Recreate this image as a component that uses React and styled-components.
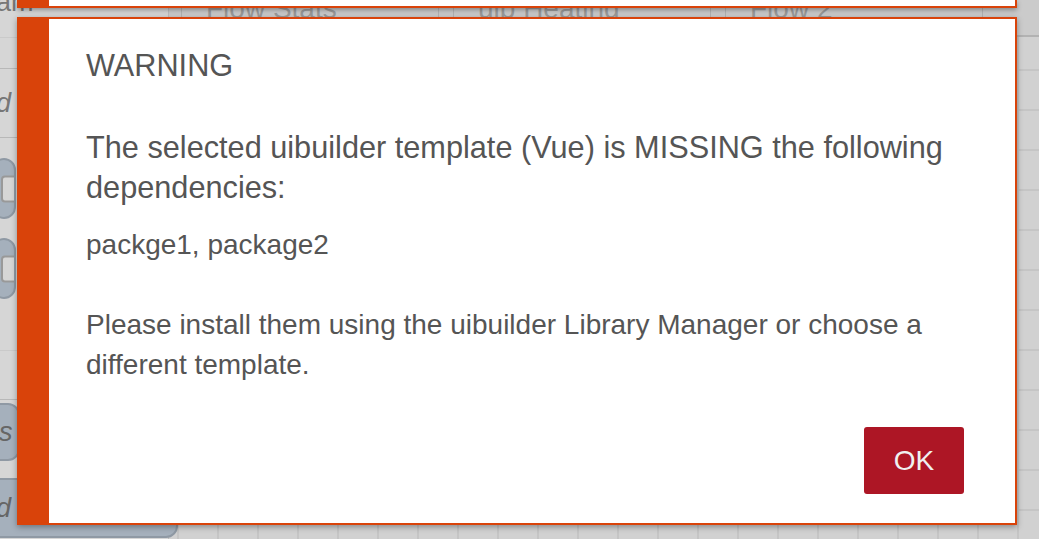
import React from 'react'
import styled, { createGlobalStyle } from 'styled-components'

const GlobalStyle = createGlobalStyle`
  html, body {
    margin: 0;
    padding: 0;
    overflow: hidden;
  }
  body {
    font-family: 'Liberation Sans', Arial, sans-serif;
  }
`

const Editor = styled.div`
  position: relative;
  display: flex;
  width: 1039px;
  height: 539px;
  overflow: hidden;
  background: #d1d1d1;
`

const Palette = styled.div`
  width: 168px;
  flex-shrink: 0;
  display: flex;
  flex-direction: column;
  background: #d6d6d6;
  border-right: 1px solid #bdbdbd;
  color: #777;
  font-size: 27px;
`

const PaletteRow = styled.div`
  height: ${(p) => p.h}px;
  flex-shrink: 0;
  border-bottom: 1px solid ${(p) => (p.dark ? '#b8b8b8' : '#cacaca')};
  display: flex;
  align-items: ${(p) => p.align || 'center'};
  font-style: ${(p) => (p.italic ? 'italic' : 'normal')};
  line-height: 1;
  white-space: nowrap;
  overflow: hidden;
`

const RowLabel = styled.span`
  margin-left: ${(p) => p.x || 0}px;
  margin-top: ${(p) => p.y || 0}px;
`

const NodeSlot = styled.div`
  height: ${(p) => p.h}px;
  flex-shrink: 0;
  padding-top: ${(p) => p.pad || 0}px;
  box-sizing: border-box;
`

const PaletteNode = styled.div`
  position: relative;
  width: ${(p) => p.w}px;
  height: ${(p) => p.h}px;
  margin-left: ${(p) => p.left || 0}px;
  background: #a5b0bc;
  border: 2px solid #8f99a4;
  border-radius: 12px;
  box-sizing: border-box;
  display: flex;
  align-items: center;
  padding-left: ${(p) => p.indent || 8}px;
  color: #666;
  font-style: italic;
  font-size: 27px;
  white-space: nowrap;
  overflow: hidden;
`

const Port = styled.div`
  position: absolute;
  right: -4px;
  top: 50%;
  width: 13px;
  height: 23px;
  transform: translateY(-50%);
  background: #d6d6d6;
  border: 2px solid #999;
  border-radius: 4px;
`

const Workspace = styled.div`
  flex: 1;
  display: flex;
  flex-direction: column;
`

const TabBar = styled.div`
  height: 37px;
  flex-shrink: 0;
  display: flex;
  align-items: flex-start;
  padding-left: 12px;
  background: #cbcbcb;
  border-bottom: 2px solid #b2b2b2;
  box-sizing: border-box;
`

const Tab = styled.div`
  width: 258px;
  height: 100%;
  box-sizing: border-box;
  border-left: 1px solid #b4b4b4;
  border-right: 1px solid #b4b4b4;
  margin-right: 14px;
  padding-left: 24px;
  color: #9b9b9b;
  font-size: 28px;
  line-height: 17px;
  white-space: nowrap;
  overflow: hidden;
`

const Grid = styled.div`
  flex: 1;
  background-color: #d1d1d1;
  background-image: linear-gradient(#c5c5c5 2px, transparent 2px),
    linear-gradient(90deg, #c5c5c5 2px, transparent 2px);
  background-size: 40px 40px;
  background-position: 8px 32px;
`

const Notifications = styled.div`
  position: absolute;
  left: 17px;
  top: 0;
  width: 1000px;
  display: flex;
  flex-direction: column;
  gap: 9px;
`

const PrevNotice = styled.div`
  height: 8px;
  box-sizing: border-box;
  background: #fff;
  border: 2px solid #d9430a;
  border-top: none;
  border-left: 32px solid #d9430a;
  box-shadow: 0 2px 5px rgba(0, 0, 0, 0.35);
`

const Dialog = styled.div`
  display: flex;
  flex-direction: column;
  background: #fff;
  border: 2px solid #d9430a;
  border-left: 32px solid #d9430a;
  padding: 27px 51px 29px 37px;
  box-shadow: 0 2px 6px rgba(0, 0, 0, 0.35);
  color: #555;
`

const Title = styled.p`
  margin: 0 0 42px;
  font-size: 30.7px;
  line-height: 40px;
`

const Text = styled.p`
  margin: 0 0 ${(p) => p.gap || 0}px;
  font-size: ${(p) => (p.large ? 30.7 : 28)}px;
  line-height: 40px;
`

const Actions = styled.div`
  display: flex;
  justify-content: flex-end;
  margin-top: 42px;
`

const OkButton = styled.button`
  width: 100px;
  height: 67px;
  border: none;
  border-radius: 3px;
  background: #ad1625;
  color: #f0f0f0;
  font-family: 'Liberation Sans', Arial, sans-serif;
  font-size: 28px;
  cursor: pointer;
`

export default function App() {
  return (
    <>
      <GlobalStyle />
      <Editor>
        <Palette>
          <PaletteRow h={37} align="flex-start">
            <RowLabel x={-4} y={-11}>am</RowLabel>
          </PaletteRow>
          <PaletteRow h={30} dark />
          <PaletteRow h={68} italic dark>
            <RowLabel x={-4}>d v</RowLabel>
          </PaletteRow>
          <NodeSlot h={80} pad={20}>
            <PaletteNode w={24} h={61} left={-8}>
              <Port />
            </PaletteNode>
          </NodeSlot>
          <NodeSlot h={90} pad={20}>
            <PaletteNode w={24} h={61} left={-8}>
              <Port />
            </PaletteNode>
          </NodeSlot>
          <PaletteRow h={42} />
          <PaletteRow h={48} dark />
          <NodeSlot h={74} pad={3}>
            <PaletteNode w={60} h={58} left={-40} indent={22}>bs</PaletteNode>
          </NodeSlot>
          <NodeSlot h={80} pad={4}>
            <PaletteNode w={220} h={60} left={-42} indent={36}>d (</PaletteNode>
          </NodeSlot>
        </Palette>
        <Workspace>
          <TabBar>
            <Tab>Flow Stats</Tab>
            <Tab>uib Heating</Tab>
            <Tab>Flow 2</Tab>
          </TabBar>
          <Grid />
        </Workspace>
        <Notifications>
          <PrevNotice />
          <Dialog>
            <Title>WARNING</Title>
            <Text large gap={17}>
              The selected uibuilder template (Vue) is MISSING the following dependencies:
            </Text>
            <Text gap={40}>packge1, package2</Text>
            <Text>
              Please install them using the uibuilder Library Manager or choose a different
              template.
            </Text>
            <Actions>
              <OkButton>OK</OkButton>
            </Actions>
          </Dialog>
        </Notifications>
      </Editor>
    </>
  )
}
